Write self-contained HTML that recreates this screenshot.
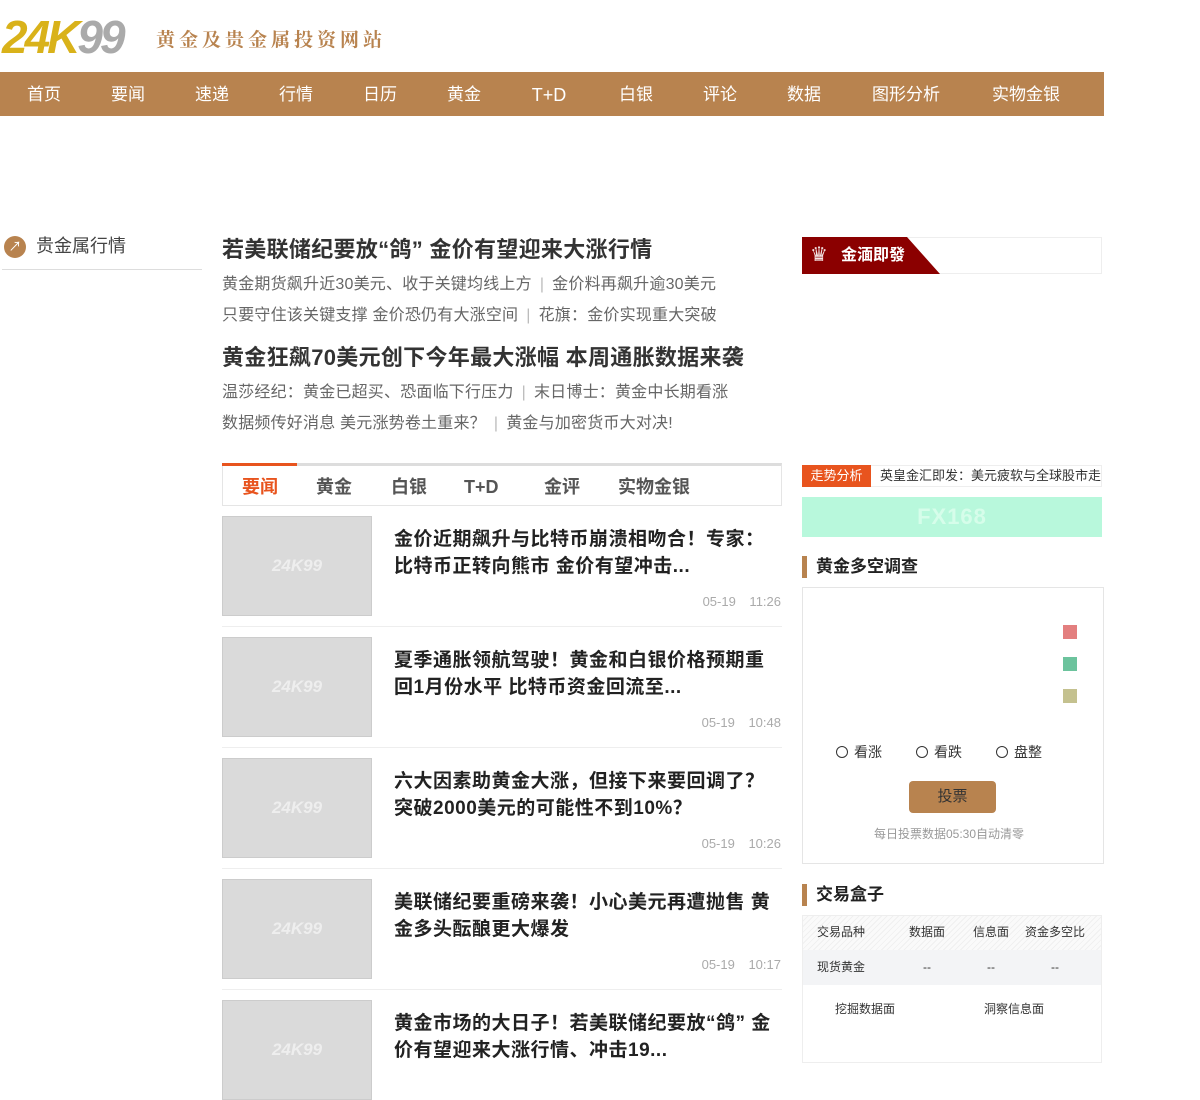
<!DOCTYPE html>
<html><head><meta charset="utf-8">
<style>
*{margin:0;padding:0;box-sizing:border-box}
body{width:1200px;height:1063px;overflow:hidden;background:#fff;font-family:"Liberation Sans","Noto Sans CJK SC",sans-serif;position:relative;color:#333}
.a{position:absolute;white-space:nowrap;line-height:1.2}
.nav{position:absolute;left:0;top:72px;width:1104px;height:44px;background:#b8834f}
.nav span{position:absolute;top:0;line-height:46px;height:44px;font-size:17px;color:#fff;transform:translateX(-50%)}
.h{font-size:22px;font-weight:bold;color:#333;letter-spacing:0.3px}
.s{font-size:16px;color:#666;letter-spacing:0.2px}
.s i{font-style:normal;color:#bbb;margin:0 8px}
.img{position:absolute;left:222px;width:150px;height:100px;background:#dadada;border:1px solid #ccc;color:#eee;font-weight:bold;font-size:17px;font-style:italic;text-align:center;line-height:98px}
.t{position:absolute;left:394px;font-size:19px;font-weight:bold;line-height:27px;color:#222;width:388px;letter-spacing:0.5px}
.d{position:absolute;right:419px;font-size:13px;color:#aaa;word-spacing:10px}
.sep{position:absolute;left:222px;width:560px;height:1px;background:#eee}
.tit{position:absolute;left:802px;font-size:17px;font-weight:bold;color:#222;border-left:5px solid #b8834f;padding-left:9px;height:22px;line-height:22px}
.tab{position:absolute;top:463px;height:43px;line-height:48px;font-size:18px;color:#555;font-weight:bold}
</style></head><body>
<div class="a" style="left:2px;top:10px;font-size:46px;font-weight:bold;font-style:italic;color:#d9b21a;letter-spacing:-3px">24K<span style="color:#aaa">99</span></div>
<div class="a" style="left:156px;top:28px;font-size:19px;color:#b8834f;letter-spacing:4px;font-family:'Noto Serif CJK SC',serif;font-weight:bold">黄金及贵金属投资网站</div>
<div class="nav">
<span style="left:44px">首页</span><span style="left:128px">要闻</span><span style="left:212px">速递</span><span style="left:296px">行情</span><span style="left:380px">日历</span><span style="left:464px">黄金</span><span style="left:549px;font-size:18px">T+D</span><span style="left:636px">白银</span><span style="left:720px">评论</span><span style="left:804px">数据</span><span style="left:906px">图形分析</span><span style="left:1026px">实物金银</span>
</div>
<div class="a" style="left:4px;top:236px;width:22px;height:22px;border-radius:50%;background:#b8834f;color:#fff;font-size:13px;text-align:center;line-height:22px">↗</div>
<div class="a" style="left:36px;top:236px;font-size:18px;color:#444">贵金属行情</div>
<div class="a" style="left:2px;top:269px;width:200px;height:1px;background:#ddd"></div>

<div class="a h" style="left:222px;top:237px">若美联储纪要放“鸽” 金价有望迎来大涨行情</div>
<div class="a s" style="left:222px;top:275px">黄金期货飙升近30美元、收于关键均线上方<i>|</i>金价料再飙升逾30美元</div>
<div class="a s" style="left:222px;top:306px">只要守住该关键支撑 金价恐仍有大涨空间<i>|</i>花旗：金价实现重大突破</div>
<div class="a h" style="left:222px;top:345px">黄金狂飙70美元创下今年最大涨幅 本周通胀数据来袭</div>
<div class="a s" style="left:222px;top:383px">温莎经纪：黄金已超买、恐面临下行压力<i>|</i>末日博士：黄金中长期看涨</div>
<div class="a s" style="left:222px;top:414px">数据频传好消息 美元涨势卷土重来？<i>|</i>黄金与加密货币大对决!</div>

<div class="a" style="left:222px;top:463px;width:560px;height:43px;border:1px solid #e5e5e5;border-top:3px solid #ddd"></div>
<div class="a" style="left:222px;top:463px;width:75px;height:3px;background:#e8541e"></div>
<div class="tab" style="left:242px;color:#e8541e">要闻</div>
<div class="tab" style="left:316px">黄金</div>
<div class="tab" style="left:391px">白银</div>
<div class="tab" style="left:464px">T+D</div>
<div class="tab" style="left:544px">金评</div>
<div class="tab" style="left:618px">实物金银</div>

<div class="img" style="top:516px">24K99</div>
<div class="t" style="top:526px">金价近期飙升与比特币崩溃相吻合！专家：比特币正转向熊市 金价有望冲击...</div>
<div class="d" style="top:594px">05-19 11:26</div>
<div class="sep" style="top:626px"></div>
<div class="img" style="top:637px">24K99</div>
<div class="t" style="top:647px">夏季通胀领航驾驶！黄金和白银价格预期重回1月份水平 比特币资金回流至...</div>
<div class="d" style="top:715px">05-19 10:48</div>
<div class="sep" style="top:747px"></div>
<div class="img" style="top:758px">24K99</div>
<div class="t" style="top:768px">六大因素助黄金大涨，但接下来要回调了？突破2000美元的可能性不到10%？</div>
<div class="d" style="top:836px">05-19 10:26</div>
<div class="sep" style="top:868px"></div>
<div class="img" style="top:879px">24K99</div>
<div class="t" style="top:889px">美联储纪要重磅来袭！小心美元再遭抛售 黄金多头酝酿更大爆发</div>
<div class="d" style="top:957px">05-19 10:17</div>
<div class="sep" style="top:989px"></div>
<div class="img" style="top:1000px">24K99</div>
<div class="t" style="top:1010px">黄金市场的大日子！若美联储纪要放“鸽” 金价有望迎来大涨行情、冲击19...</div>

<div class="a" style="left:802px;top:237px;width:300px;height:37px;border:1px solid #eee"></div>
<div class="a" style="left:802px;top:237px;width:138px;height:37px;background:#8b0000;clip-path:polygon(0 0,105px 0,138px 100%,0 100%)"></div>
<div class="a" style="left:810px;top:243px;font-size:20px;color:#f4e6e6">♛</div>
<div class="a" style="left:841px;top:246px;font-size:16px;color:#fff;font-weight:bold">金湎即發</div>

<div class="a" style="left:802px;top:465px;width:300px;height:22px;border:1px solid #eee"></div>
<div class="a" style="left:802px;top:465px;width:69px;height:22px;background:#e8541e;color:#fff;font-size:13px;text-align:center;line-height:22px">走势分析</div>
<div class="a" style="left:880px;top:468px;font-size:13px;color:#333">英皇金汇即发：美元疲软与全球股市走</div>
<div class="a" style="left:802px;top:497px;width:300px;height:40px;background:#b8f8dc;color:#d6fdea;font-size:22px;font-weight:bold;text-align:center;line-height:40px;letter-spacing:1px">FX168</div>

<div class="tit" style="top:556px">黄金多空调查</div>
<div class="a" style="left:802px;top:587px;width:302px;height:277px;border:1px solid #e5e5e5"></div>
<div class="a" style="left:1063px;top:625px;width:14px;height:14px;background:#e37f7f"></div>
<div class="a" style="left:1063px;top:657px;width:14px;height:14px;background:#6cc39d"></div>
<div class="a" style="left:1063px;top:689px;width:14px;height:14px;background:#c4c18f"></div>
<div class="a" style="left:836px;top:744px;font-size:14px;color:#333"><span style="display:inline-block;width:12px;height:12px;border:1px solid #333;border-radius:50%;vertical-align:-1px;margin-right:6px"></span>看涨</div>
<div class="a" style="left:916px;top:744px;font-size:14px;color:#333"><span style="display:inline-block;width:12px;height:12px;border:1px solid #333;border-radius:50%;vertical-align:-1px;margin-right:6px"></span>看跌</div>
<div class="a" style="left:996px;top:744px;font-size:14px;color:#333"><span style="display:inline-block;width:12px;height:12px;border:1px solid #333;border-radius:50%;vertical-align:-1px;margin-right:6px"></span>盘整</div>
<div class="a" style="left:909px;top:781px;width:87px;height:32px;background:#b8834f;border-radius:4px;color:#333;font-size:15px;text-align:center;line-height:32px">投票</div>
<div class="a" style="left:874px;top:827px;font-size:12px;color:#999">每日投票数据05:30自动清零</div>

<div class="tit" style="top:884px">交易盒子</div>
<div class="a" style="left:802px;top:915px;width:300px;height:148px;border:1px solid #eee"></div>
<div class="a" style="left:803px;top:916px;width:298px;height:34px;background:repeating-linear-gradient(135deg,#fafafa 0 3px,#f0f0f0 3px 4px)"></div>
<div class="a" style="left:803px;top:950px;width:298px;height:35px;background:#f3f4f6"></div>
<div class="a" style="left:817px;top:925px;font-size:12px;color:#333">交易品种</div>
<div class="a" style="left:909px;top:925px;font-size:12px;color:#333">数据面</div>
<div class="a" style="left:973px;top:925px;font-size:12px;color:#333">信息面</div>
<div class="a" style="left:1025px;top:925px;font-size:12px;color:#333">资金多空比</div>
<div class="a" style="left:817px;top:960px;font-size:12px;color:#333">现货黄金</div>
<div class="a" style="left:923px;top:960px;font-size:12px;color:#333">--</div>
<div class="a" style="left:987px;top:960px;font-size:12px;color:#333">--</div>
<div class="a" style="left:1051px;top:960px;font-size:12px;color:#333">--</div>
<div class="a" style="left:835px;top:1002px;font-size:12px;color:#333">挖掘数据面</div>
<div class="a" style="left:984px;top:1002px;font-size:12px;color:#333">洞察信息面</div>
</body></html>
